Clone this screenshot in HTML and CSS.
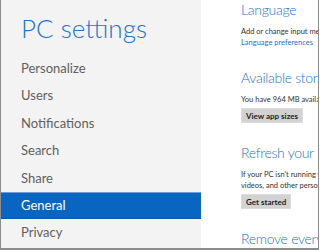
FILE: index.html
```html
<!DOCTYPE html>
<html lang="en">
<head>
    <meta charset="UTF-8">
    <title>PC settings</title>
    <link rel="stylesheet" href="styles.css">
</head>
<body>
    <div class="screen">
        <div class="sidebar">
            <h1 class="title">PC settings</h1>
            <ul class="nav">
                <li class="nav-item">Personalize</li>
                <li class="nav-item">Users</li>
                <li class="nav-item">Notifications</li>
                <li class="nav-item">Search</li>
                <li class="nav-item">Share</li>
                <li class="nav-item active">General</li>
                <li class="nav-item">Privacy</li>
            </ul>
        </div>

        <div class="content">
            <div class="group first">
                <h2>Language</h2>
                <p class="desc">Add or change input methods, keyboard layouts, and languages.</p>
                <a class="link" href="#">Language preferences</a>
            </div>

            <div class="group">
                <h2>Available storage</h2>
                <p class="desc">You have 964 MB available. See how much space your apps are using.</p>
                <button class="grey-button">View app sizes</button>
            </div>

            <div class="group">
                <h2>Refresh your PC without affecting your files</h2>
                <p class="desc">If your PC isn't running well, you can refresh it without losing your photos, music,<br>videos, and other personal files.</p>
                <button class="grey-button">Get started</button>
            </div>

            <div class="group">
                <h2>Remove everything and reinstall Windows</h2>
            </div>
        </div>
    </div>
</body>
</html>
```

FILE: styles.css
```css
:root {
    --accent: #2672d0;
    --selected: #0866c2;
    --panel: #f3f3f3;
    --frame: #8c8c8c;
    --menu-text: #606060;
}

* {
    margin: 0;
    padding: 0;
    box-sizing: border-box;
}

body {
    font-family: Lato, 'Open Sans', sans-serif;
    background: white;
    width: 320px;
    height: 250px;
    overflow: hidden;
}

.screen {
    display: flex;
    width: 319px;
    height: 250px;
    border-left: 1px solid var(--frame);
    border-right: 1px solid var(--frame);
    border-bottom: 2px solid var(--frame);
    overflow: hidden;
}

.sidebar {
    width: 200px;
    flex-shrink: 0;
    background: var(--panel);
    padding-top: 10px;
}

.title {
    font-size: 26px;
    font-weight: 300;
    color: var(--accent);
    line-height: 36px;
    padding-left: 20px;
    height: 45px;
}

.nav {
    list-style: none;
}

.nav-item {
    height: 27.4px;
    line-height: 27px;
    padding-left: 20px;
    font-size: 13px;
    color: var(--menu-text);
}

.nav-item.active {
    background: var(--selected);
    color: white;
    border-top: 1px solid #6f9ad6;
    border-bottom: 1px solid #0a56a8;
    line-height: 25px;
}

.content {
    flex: 1;
    background: white;
    padding-left: 40px;
    overflow: hidden;
    white-space: nowrap;
}

.group {
    margin-top: 20px;
}

.group.first {
    margin-top: 0;
}

.group h2 {
    font-size: 14px;
    font-weight: 300;
    letter-spacing: -0.3px;
    color: var(--accent);
    line-height: 20px;
}

.desc {
    font-size: 7.5px;
    line-height: 11px;
    color: #333;
    margin-top: 6px;
}

.link {
    display: block;
    font-size: 7.5px;
    line-height: 11px;
    color: var(--accent);
    text-decoration: none;
}

.grey-button {
    display: block;
    margin-top: 3px;
    height: 15px;
    padding: 0 4px;
    font-family: inherit;
    font-size: 8px;
    font-weight: 700;
    color: #222;
    background: #d2d2d2;
    border: 1px solid #dcdcdc;
}
```
